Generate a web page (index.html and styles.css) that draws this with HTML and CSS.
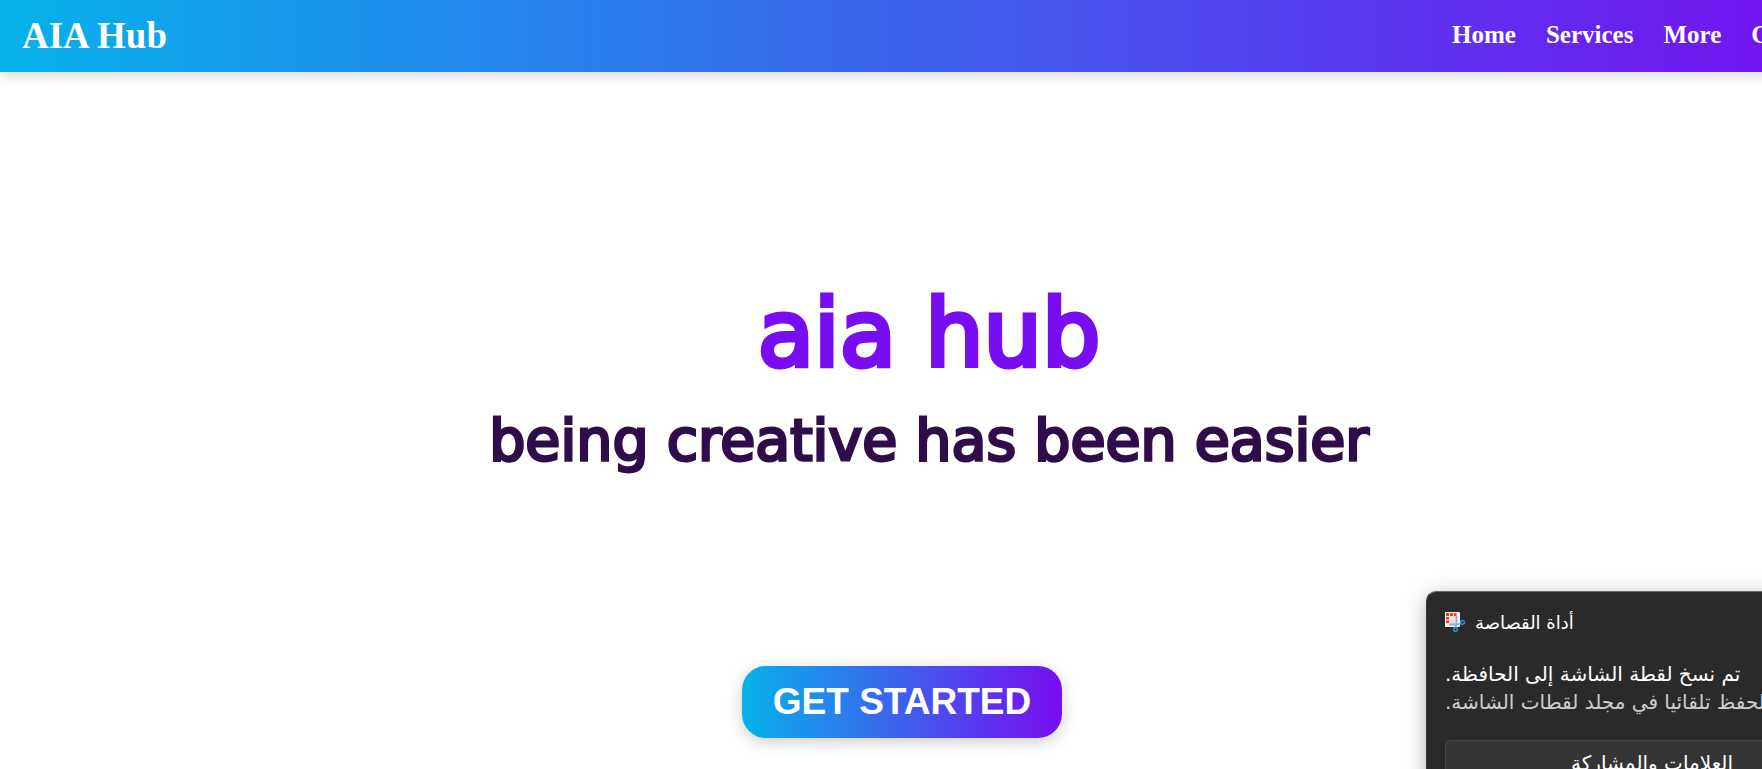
FILE: index.html
```html
<!DOCTYPE html>
<html lang="en">
<head>
<meta charset="utf-8">
<title>AIA Hub</title>
<link rel="stylesheet" href="styles.css">
</head>
<body>
<div class="page">
  <header class="header">
    <a class="logo" href="#">AIA Hub</a>
    <nav class="nav">
      <a href="#">Home</a>
      <a href="#">Services</a>
      <a href="#">More</a>
      <a href="#">Contact</a>
    </nav>
  </header>
  <main class="hero">
    <h1 class="title">aia hub</h1>
    <h2 class="tagline">being creative has been easier</h2>
    <div class="actions"><button class="start" type="button">GET STARTED</button></div>
  </main>
</div>
<aside class="toast" lang="ar">
  <div class="toast-head">
    <svg class="toast-icon" viewBox="0 0 20 20" aria-hidden="true">
      <rect x="0" y="0" width="15" height="15" rx="1" fill="#f1f3f5"/>
      <path d="M4 4h8v9H4z" fill="#dfe3e8"/>
      <path d="M1 1h3v3H1zM5 1h3v3H5zM9 1h2.500v3H9zM1 5h3v2.500H1zM1 8.500h3v2.500H1z" fill="#e2460f"/>
      <path d="M11.500 4v8.500L10 15.500M4 12.500h8l4-1" fill="none" stroke="#a5abb3" stroke-width="1.800"/>
      <circle cx="17.500" cy="10.500" r="1.900" fill="none" stroke="#1c95dc" stroke-width="1.500"/>
      <circle cx="10.500" cy="17.500" r="1.900" fill="none" stroke="#1c95dc" stroke-width="1.500"/>
    </svg>
    <span dir="rtl">أداة القصاصة</span>
  </div>
  <p class="toast-text" dir="rtl">تم نسخ لقطة الشاشة إلى الحافظة.</p>
  <p class="toast-text muted" dir="rtl">تم الحفظ تلقائيا في مجلد لقطات الشاشة.</p>
  <button class="toast-action" type="button" dir="rtl">العلامات والمشاركة</button>
</aside>
</body>
</html>
```
FILE: styles.css
```css
* { box-sizing: border-box; }

body {
  margin: 0;
  position: relative;
  min-height: 100vh;
  overflow: hidden;
  background: #fff;
  font-family: "Liberation Serif", serif;
}

/* The page is wider than the window and runs off its right edge. */
.page { width: calc(100% + 96px); }

.header {
  display: flex;
  align-items: center;
  justify-content: space-between;
  height: 72px;
  padding: 0 22px 2px;
  background: linear-gradient(90deg, #06b2ea, #770df0);
  box-shadow: 0 4px 12px rgba(0, 0, 0, 0.15);
}

.header a {
  color: #fff;
  font-weight: bold;
  text-decoration: none;
}

.header .logo { font-size: 37px; }

.nav {
  display: flex;
  gap: 30px;
  font-size: 25px;
}

.hero {
  display: flex;
  flex-direction: column;
  gap: 10px;
  padding-top: 208px;
  font-family: "Comic Sans MS", "DejaVu Sans", sans-serif;
  text-align: center;
}

.title, .tagline {
  margin: 0;
  font-weight: normal;
}

.title {
  color: #770df0;
  font-size: 92px;
  line-height: 110px;
  -webkit-text-stroke: 5px #770df0;
}

.tagline {
  color: #2e0d4a;
  font-size: 57px;
  line-height: 80px;
  -webkit-text-stroke: 3px #2e0d4a;
}

.actions { padding: 176px 54px 31px 0; }

.start {
  height: 72px;
  padding: 0 31px;
  border: 0;
  border-radius: 24px;
  background: linear-gradient(90deg, #06b2ea, #770df0);
  box-shadow: 0 4px 15px rgba(0, 0, 0, 0.2);
  color: #fff;
  font: bold 37px "Liberation Sans", sans-serif;
}

.toast {
  position: absolute;
  top: 591px;
  left: calc(100% - 336px);
  width: 452px;
  padding: 20px 18px;
  border: 1px solid #3a3a3a;
  border-top-color: #6b6b6b;
  border-radius: 10px;
  background: #2a2a2a;
  box-shadow: 0 4px 20px rgba(0, 0, 0, 0.3);
  color: #fff;
  font-family: "DejaVu Sans", sans-serif;
}

.toast-head {
  display: flex;
  align-items: center;
  gap: 10px;
  height: 20px;
  margin-bottom: 28px;
  font-size: 18px;
}

.toast-icon { width: 20px; height: 20px; }

.toast-text {
  width: max-content;
  margin: 0;
  font-size: 20px;
  line-height: 28px;
}

.muted { color: #cdcdcd; }

.toast-action {
  width: 100%;
  height: 46px;
  margin-top: 24px;
  border: 1px solid #464646;
  border-radius: 5px;
  background: #353535;
  color: #fff;
  font: 20px "DejaVu Sans", sans-serif;
}
```
